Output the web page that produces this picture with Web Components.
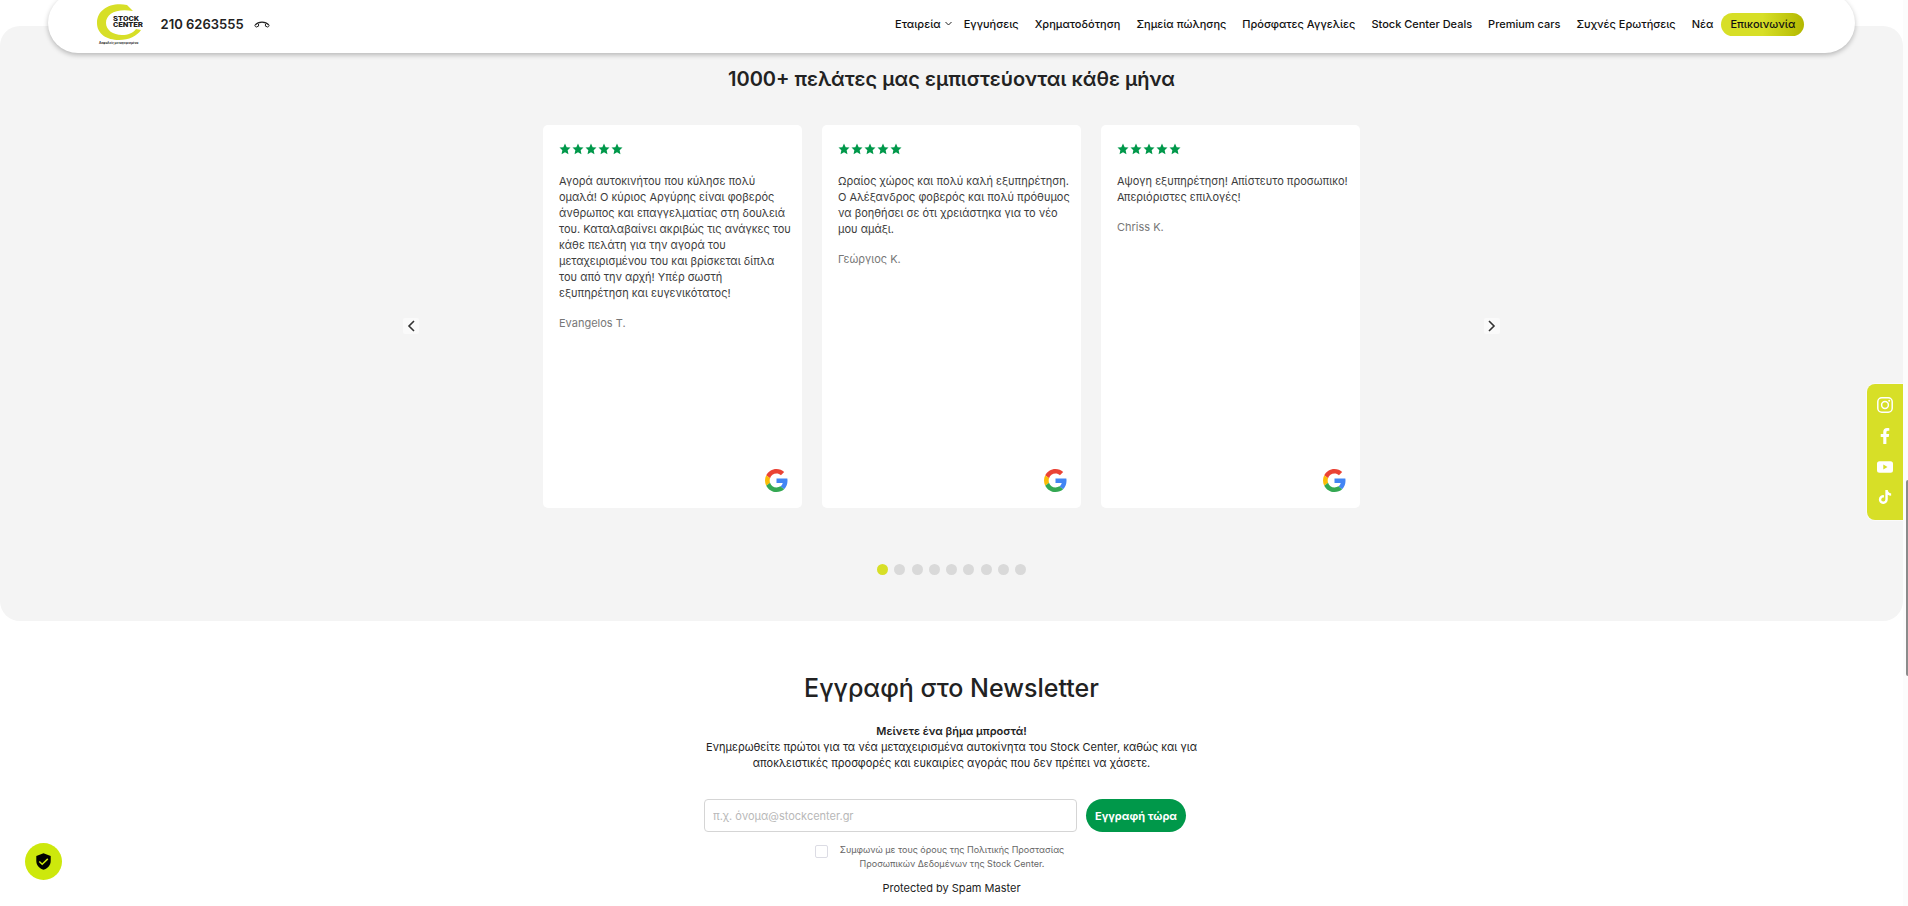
<!DOCTYPE html>
<html lang="el">
<head>
    <meta charset="utf-8">
    <meta name="viewport" content="width=device-width, initial-scale=1">
    <title>Stock Center</title>
    <style>
        :root {
            --lime: #d7df27;
            --green: #00984a;
            --ink: #222;
        }
        html {
            overflow: hidden;
        }
        body {
            margin: 0;
            padding-right: 5px;
            background: #fff;
            color: var(--ink);
            font-family: Inter, "Liberation Sans", sans-serif;
            font-size: 11px;
            line-height: 16px;
        }
    </style>
</head>
<body>
    <site-header phone="210 6263555"></site-header>
    <main>
        <review-carousel heading="1000+ πελάτες μας εμπιστεύονται κάθε μήνα" pages="9">
            <review-card>
                Αγορά αυτοκινήτου που κύλησε πολύ ομαλά! Ο κύριος Αργύρης είναι φοβερός άνθρωπος και επαγγελματίας στη δουλειά του. Καταλαβαίνει ακριβώς τις ανάγκες του κάθε πελάτη για την αγορά του μεταχειρισμένου του και βρίσκεται δίπλα του από την αρχή! Υπέρ σωστή εξυπηρέτηση και ευγενικότατος!
                <span slot="author">Evangelos T.</span>
            </review-card>
            <review-card>
                Ωραίος χώρος και πολύ καλή εξυπηρέτηση. Ο Αλέξανδρος φοβερός και πολύ πρόθυμος να βοηθήσει σε ότι χρειάστηκα για το νέο μου αμάξι.
                <span slot="author">Γεώργιος Κ.</span>
            </review-card>
            <review-card>
                Αψογη εξυπηρέτηση! Απίστευτο προσωπικο! Απεριόριστες επιλογές!
                <span slot="author">Chriss K.</span>
            </review-card>
        </review-carousel>
        <newsletter-form></newsletter-form>
    </main>
    <social-bar></social-bar>
    <consent-button></consent-button>
    <page-scrollbar></page-scrollbar>

    <script>
        class SiteHeader extends HTMLElement {
            constructor() {
                super();
                this._root = this.attachShadow({ mode: "open" });
            }
            connectedCallback() {
                const links = ["Εγγυήσεις", "Χρηματοδότηση", "Σημεία πώλησης", "Πρόσφατες Αγγελίες", "Stock Center Deals", "Premium cars", "Συχνές Ερωτήσεις", "Νέα"];
                this._root.innerHTML = `
                    <style>
                        :host {
                            display: block;
                            position: relative;
                            z-index: 2;
                        }
                        header {
                            display: flex;
                            align-items: center;
                            box-sizing: border-box;
                            width: 95%;
                            height: 60px;
                            margin: -7px auto 0;
                            padding: 2px 51px 0 48px;
                            border-radius: 30px;
                            background: #fff;
                            box-shadow: 0 2px 5px rgba(0, 0, 0, .25);
                        }
                        a {
                            color: inherit;
                            text-decoration: none;
                        }
                        .logo, .logo svg {
                            display: block;
                        }
                        .phone {
                            display: flex;
                            align-items: center;
                            gap: 10px;
                            margin-left: 18px;
                            font-size: 13px;
                            font-weight: 600;
                        }
                        nav {
                            display: flex;
                            align-items: center;
                            margin-left: auto;
                            color: #111;
                            font-weight: 500;
                        }
                        nav a {
                            padding: 3px 8px 4px;
                            white-space: nowrap;
                        }
                        nav a.menu {
                            display: flex;
                            align-items: center;
                            gap: 4px;
                            padding-right: 4px;
                        }
                        nav a.contact {
                            padding: 3px 9px 4px;
                            border-radius: 12px;
                            background: linear-gradient(90deg, var(--lime) 50%, #b3b800);
                        }
                    </style>
                    <header>
                        <a class="logo" href="#" aria-label="Stock Center">
                            <svg width="47" height="41" viewBox="0 0 47 41">
                                <path fill="#d7df27" d="M31 1C14-2 1 6 1 19c0 11 10 17 22 17 10 0 18-4 22-10l-5-1c-3 4-8 6-14 6-9 0-16-5-16-12C10 10 20 4 37 7z"/>
                                <g fill="#222" font-family="Roboto, sans-serif" font-weight="900" font-size="8">
                                    <text x="17" y="17">STOCK</text>
                                    <text x="17" y="23">CENTER</text>
                                </g>
                                <text x="3" y="40" fill="#222" font-family="Inter, sans-serif" font-weight="700" font-size="3">Ασφαλείς μεταχειρισμένα</text>
                            </svg>
                        </a>
                        <a class="phone" href="tel:2106263555">
                            <span>${this.getAttribute("phone")}</span>
                            <svg width="16" height="7" viewBox="0 0 16 7" fill="none" stroke="#222">
                                <path stroke-width="1.200" d="M1.200 3.800C4.500.1 11.500.1 14.800 3.800"/>
                                <path stroke-linejoin="round" d="M1.200 3.800c-.7 1 0 1.700 1 2.300l2.400-1-.1-2.200M14.800 3.800c.7 1 0 1.700-1 2.300l-2.400-1 .1-2.200"/>
                            </svg>
                        </a>
                        <nav>
                            <a class="menu" href="#"><span>Εταιρεία</span>
                                <svg width="7" height="5" viewBox="0 0 7 5" fill="none" stroke="#222"><path d="M.5 1l3 3 3-3"/></svg>
                            </a>
                            ${links.map((text) => `<a href="#">${text}</a>`).join("")}
                            <a class="contact" href="#">Επικοινωνία</a>
                        </nav>
                    </header>
                `;
            }
        }
        window.customElements.define("site-header", SiteHeader);

        class ReviewCard extends HTMLElement {
            constructor() {
                super();
                this._root = this.attachShadow({ mode: "open" });
            }
            connectedCallback() {
                const star = `<svg width="12" height="12" viewBox="0 0 24 24"><path d="M12 1l3.300 7.300 7.700.8-5.700 5.300 1.600 7.900L12 18.300l-6.900 4 1.600-7.900L1 9.100l7.700-.8z"/></svg>`;
                this._root.innerHTML = `
                    <style>
                        :host {
                            display: flex;
                            flex-direction: column;
                            flex: 1 1 0;
                            min-width: 0;
                            min-height: 383px;
                            box-sizing: border-box;
                            padding: 16px 10px 16px 16px;
                            border-radius: 5px;
                            background: #fff;
                            color: #3c3c3c;
                        }
                        .stars {
                            display: flex;
                            gap: 1px;
                            height: 12px;
                            margin: 2px 0 18px;
                            fill: var(--green);
                        }
                        p {
                            margin: 0 0 14px;
                        }
                        .author {
                            color: #777;
                        }
                        .google {
                            display: block;
                            margin: auto 4px 0 auto;
                        }
                    </style>
                    <div class="stars" role="img" aria-label="5/5">${star.repeat(5)}</div>
                    <p><slot></slot></p>
                    <p class="author"><slot name="author"></slot></p>
                    <svg class="google" width="23" height="23" viewBox="0 0 48 48" role="img" aria-label="Google">
                        <path fill="#ea4335" d="M24 9.500c3.540 0 6.710 1.220 9.210 3.600l6.850-6.850C35.900 2.380 30.470 0 24 0 14.620 0 6.510 5.380 2.560 13.220l7.980 6.190C12.430 13.720 17.740 9.500 24 9.500z"/>
                        <path fill="#4285f4" d="M46.980 24.550c0-1.570-.15-3.090-.38-4.550H24v9.020h12.940c-.58 2.960-2.260 5.480-4.780 7.180l7.730 6c4.510-4.180 7.090-10.360 7.090-17.650z"/>
                        <path fill="#fbbc05" d="M10.530 28.590c-.48-1.450-.76-2.990-.76-4.590s.27-3.140.76-4.590l-7.980-6.190C.92 16.460 0 20.120 0 24c0 3.880.92 7.540 2.560 10.780z"/>
                        <path fill="#34a853" d="M24 48c6.480 0 11.930-2.130 15.890-5.810l-7.730-6c-2.150 1.450-4.920 2.300-8.160 2.300-6.260 0-11.570-4.220-13.470-9.910l-7.980 6.190C6.510 42.620 14.620 48 24 48z"/>
                    </svg>
                `;
            }
        }
        window.customElements.define("review-card", ReviewCard);

        class ReviewCarousel extends HTMLElement {
            constructor() {
                super();
                this._root = this.attachShadow({ mode: "open" });
            }
            connectedCallback() {
                const pages = Number(this.getAttribute("pages"));
                let dots = "";
                for (let i = 1; i <= pages; i++) {
                    dots += `<button aria-label="${i}"${i === 1 ? ' class="active"' : ""}></button>`;
                }
                this._root.innerHTML = `
                    <style>
                        :host {
                            display: block;
                            margin-top: -27px;
                            padding: 39px 0 46px;
                            border-radius: 20px;
                            background: #f4f4f4;
                        }
                        h2 {
                            margin: 0 0 32px;
                            font-size: 20px;
                            font-weight: 600;
                            line-height: 28px;
                            text-align: center;
                        }
                        button {
                            padding: 0;
                            border: 0;
                            cursor: pointer;
                        }
                        .row {
                            display: flex;
                            align-items: center;
                            justify-content: space-between;
                            max-width: 1097px;
                            margin: 0 auto;
                        }
                        .row > button {
                            display: flex;
                            align-items: center;
                            justify-content: center;
                            width: 16px;
                            height: 16px;
                            margin-top: 18px;
                            border-radius: 2px;
                            background: #fafafa;
                        }
                        .cards {
                            display: flex;
                            flex: 0 1 817px;
                            gap: 20px;
                        }
                        .dots {
                            display: flex;
                            justify-content: space-between;
                            width: 149px;
                            margin: 56px auto 0;
                        }
                        .dots button {
                            width: 11px;
                            height: 11px;
                            border-radius: 50%;
                            background: #d9d9d9;
                        }
                        .dots .active {
                            background: var(--lime);
                        }
                    </style>
                    <h2>${this.getAttribute("heading")}</h2>
                    <div class="row">
                        <button aria-label="Προηγούμενο"><svg width="8" height="12" viewBox="0 0 8 12" fill="none" stroke="#333" stroke-width="1.600"><path d="M7 1L2 6l5 5"/></svg></button>
                        <div class="cards"><slot></slot></div>
                        <button aria-label="Επόμενο"><svg width="8" height="12" viewBox="0 0 8 12" fill="none" stroke="#333" stroke-width="1.600"><path d="M1 1l5 5-5 5"/></svg></button>
                    </div>
                    <div class="dots">${dots}</div>
                `;
            }
        }
        window.customElements.define("review-carousel", ReviewCarousel);

        class NewsletterForm extends HTMLElement {
            constructor() {
                super();
                this._root = this.attachShadow({ mode: "open" });
            }
            connectedCallback() {
                this._root.innerHTML = `
                    <style>
                        :host {
                            display: block;
                            max-width: 495px;
                            margin: 0 auto;
                            padding-top: 50px;
                            text-align: center;
                        }
                        h2 {
                            margin: 0 0 17px;
                            font-size: 25px;
                            font-weight: 500;
                            line-height: 35px;
                        }
                        p {
                            margin: 0;
                        }
                        b {
                            font-weight: 600;
                        }
                        .fields {
                            display: flex;
                            gap: 9px;
                            margin: 28px 13px 11px 0;
                        }
                        input, button {
                            box-sizing: border-box;
                            font: inherit;
                        }
                        input[type="email"] {
                            flex: 1;
                            min-width: 0;
                            height: 33px;
                            padding: 0 8px;
                            border: 1px solid #d5d5d5;
                            border-radius: 4px;
                            color: inherit;
                        }
                        input::placeholder {
                            color: #b8b8b8;
                        }
                        button {
                            flex: 0 0 100px;
                            padding: 0;
                            border: 0;
                            border-radius: 17px;
                            background: var(--green);
                            color: #fff;
                            font-weight: 700;
                            cursor: pointer;
                        }
                        .terms {
                            display: flex;
                            justify-content: center;
                            gap: 10px;
                            margin: 0 22px 9px 0;
                            color: #666;
                            font-size: 9px;
                            line-height: 14px;
                        }
                        .terms input {
                            appearance: none;
                            width: 13px;
                            height: 13px;
                            margin: 2px 0 0;
                            border: 1px solid #dcdce4;
                            border-radius: 2px;
                        }
                        .terms label {
                            width: 228px;
                        }
                    </style>
                    <h2>Εγγραφή στο Newsletter</h2>
                    <p><b>Μείνετε ένα βήμα μπροστά!</b></p>
                    <p>Ενημερωθείτε πρώτοι για τα νέα μεταχειρισμένα αυτοκίνητα του Stock Center, καθώς και για αποκλειστικές προσφορές και ευκαιρίες αγοράς που δεν πρέπει να χάσετε.</p>
                    <form>
                        <div class="fields">
                            <input type="email" aria-label="Email" placeholder="π.χ. όνομα@stockcenter.gr">
                            <button type="button">Εγγραφή τώρα</button>
                        </div>
                        <div class="terms">
                            <input type="checkbox" id="terms">
                            <label for="terms">Συμφωνώ με τους όρους της Πολιτικής Προστασίας Προσωπικών Δεδομένων της Stock Center.</label>
                        </div>
                        <p>Protected by Spam Master</p>
                    </form>
                `;
            }
        }
        window.customElements.define("newsletter-form", NewsletterForm);

        class SocialBar extends HTMLElement {
            constructor() {
                super();
                this._root = this.attachShadow({ mode: "open" });
            }
            connectedCallback() {
                this._root.innerHTML = `
                    <style>
                        :host {
                            position: fixed;
                            top: 384px;
                            right: 5px;
                            display: flex;
                            flex-direction: column;
                            align-items: center;
                            gap: 15px;
                            box-sizing: border-box;
                            width: 36px;
                            padding: 13px 0 16px;
                            border-radius: 8px 0 0 8px;
                            background: var(--lime);
                            box-shadow: 0 0 0 1px #fafafa;
                            clip-path: inset(-1px 0 -1px -1px);
                        }
                        a, svg {
                            display: block;
                        }
                    </style>
                    <a href="#" aria-label="Instagram"><svg width="16" height="16" viewBox="0 0 16 16" fill="none" stroke="#fff" stroke-width="1.500"><rect x=".8" y=".8" width="14.400" height="14.400" rx="4"/><circle cx="8" cy="8" r="3.400"/><circle cx="12.200" cy="3.800" r="1" fill="#fff" stroke="none"/></svg></a>
                    <a href="#" aria-label="Facebook"><svg width="16" height="16" viewBox="0 0 320 512" fill="#fff"><path d="M279 288l14-93h-89v-60c0-25 12-50 52-50h41V7s-37-7-72-7c-73 0-121 44-121 125v70H23v93h81v224h100V288z"/></svg></a>
                    <a href="#" aria-label="YouTube"><svg width="16" height="16" viewBox="0 0 16 16"><path fill="#fff" fill-rule="evenodd" d="M2.500 2.200h11A2.500 2.500 0 0 1 16 4.700v6.600a2.500 2.500 0 0 1-2.500 2.500h-11A2.500 2.500 0 0 1 0 11.300V4.700a2.500 2.500 0 0 1 2.500-2.500zM6.300 5.500v5l4.200-2.500z"/></svg></a>
                    <a href="#" aria-label="TikTok"><svg width="14" height="14" viewBox="0 0 448 512" fill="#fff"><path d="M448 210a210 210 0 0 1-123-39v179A163 163 0 1 1 185 188v90a75 75 0 1 0 52 71V0h88a121 121 0 0 0 2 22 122 122 0 0 0 54 80 121 121 0 0 0 67 20z"/></svg></a>
                `;
            }
        }
        window.customElements.define("social-bar", SocialBar);

        class ConsentButton extends HTMLElement {
            constructor() {
                super();
                this._root = this.attachShadow({ mode: "open" });
            }
            connectedCallback() {
                this._root.innerHTML = `
                    <style>
                        :host {
                            position: fixed;
                            left: 25px;
                            bottom: 26px;
                            display: block;
                        }
                        button {
                            display: flex;
                            align-items: center;
                            justify-content: center;
                            width: 37px;
                            height: 37px;
                            padding: 0;
                            border: 0;
                            border-radius: 50%;
                            background: #cde80c;
                            cursor: pointer;
                        }
                    </style>
                    <button aria-label="Cookies">
                        <svg width="15" height="17" viewBox="0 0 15 17">
                            <path d="M7.500.3L14.700 3v5c0 4.300-3 7.600-7.200 8.800C3.300 15.600.3 12.300.3 8V3z"/>
                            <path fill="none" stroke="#cde80c" stroke-width="1.500" d="M3.300 8.500l2.900 2.800 5.600-5.400"/>
                        </svg>
                    </button>
                `;
            }
        }
        window.customElements.define("consent-button", ConsentButton);

        class PageScrollbar extends HTMLElement {
            constructor() {
                super();
                this._root = this.attachShadow({ mode: "open" });
            }
            connectedCallback() {
                this._root.innerHTML = `
                    <style>
                        :host {
                            position: fixed;
                            top: 0;
                            right: 0;
                            bottom: 0;
                            z-index: 3;
                            display: flex;
                            flex-direction: column;
                            align-items: flex-end;
                            width: 5px;
                            background: #fcfcfc;
                        }
                        div {
                            width: 2px;
                            height: 196px;
                            margin-top: 480px;
                            border-radius: 2px 0 0 2px;
                            background: #8b8b8b;
                        }
                    </style>
                    <div></div>
                `;
            }
        }
        window.customElements.define("page-scrollbar", PageScrollbar);
    </script>
</body>
</html>
